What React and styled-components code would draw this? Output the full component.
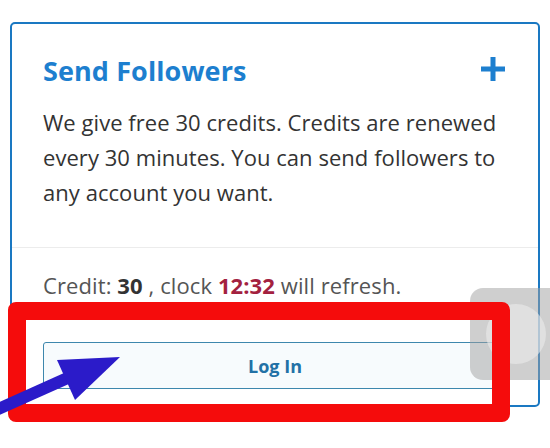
import React from 'react'
import styled, { createGlobalStyle } from 'styled-components'

const Global = createGlobalStyle`
  html, body {
    margin: 0;
    padding: 0;
    background: #fff;
  }
  body {
    font-family: "Open Sans", "Noto Sans", sans-serif;
    width: 550px;
    height: 448px;
    overflow: hidden;
    position: relative;
  }
`

const Page = styled.div`
  padding: 22px 10px 0 10px;
`

const Card = styled.div`
  border: 2px solid #1a78c2;
  border-radius: 5px;
  background: #fff;
  height: 385px;
  box-sizing: border-box;
  display: flex;
  flex-direction: column;
`

const Top = styled.div`
  padding: 30px 31px 0 31px;
  height: 224px;
  box-sizing: border-box;
  border-bottom: 1px solid #ececec;
`

const TitleRow = styled.div`
  display: flex;
  align-items: center;
  justify-content: space-between;
  height: 34px;
`

const Title = styled.h3`
  margin: 0;
  font-size: 27px;
  line-height: 34px;
  font-weight: 700;
  color: #1d7fcf;
  letter-spacing: 0.1px;
`

const Plus = styled.svg`
  width: 26px;
  height: 26px;
  margin-right: 1px;
  margin-top: -5px;
`

const Text = styled.p`
  margin: 17px 0 0 0;
  font-size: 22px;
  line-height: 35px;
  color: #333;
  letter-spacing: 0.05px;
`

const Bottom = styled.div`
  padding: 23px 31px 0 31px;
`

const Credit = styled.div`
  font-size: 22px;
  line-height: 28px;
  color: #555;
  letter-spacing: 0.1px;
`

const Strong = styled.b`
  color: ${p => p.$color || '#333'};
  font-weight: 700;
`

const Button = styled.button`
  display: block;
  width: 100%;
  height: 47px;
  margin-top: 43px;
  border: 1px solid #3d87ad;
  border-radius: 3px;
  background: #f7fbfd;
  color: #2271a6;
  font-family: "Open Sans", sans-serif;
  font-size: 18px;
  font-weight: 700;
`

const RedBox = styled.div`
  position: absolute;
  left: 8px;
  top: 302px;
  width: 502px;
  height: 120px;
  box-sizing: border-box;
  border: 18px solid #f50c0c;
  border-radius: 8px;
`

const Bubble = styled.div`
  position: absolute;
  left: 470px;
  top: 288px;
  width: 100px;
  height: 92px;
  border-radius: 13px;
  background: rgba(160, 160, 160, 0.5);
  display: flex;
  align-items: center;
  padding-left: 16px;
  box-sizing: border-box;
`

const Dot = styled.div`
  width: 60px;
  height: 60px;
  border-radius: 50%;
  background: rgba(235, 235, 235, 0.6);
`

const Arrow = styled.svg`
  position: absolute;
  left: 0;
  top: 340px;
  width: 130px;
  height: 80px;
`

export default function App() {
  return (
    <>
      <Global />
      <Page>
        <Card>
          <Top>
            <TitleRow>
              <Title>Send Followers</Title>
              <Plus viewBox="0 0 26 26">
                <path d="M13 1v24M1 13h24" stroke="#1d7fcf" strokeWidth="5" />
              </Plus>
            </TitleRow>
            <Text>
              We give free 30 credits. Credits are renewed every 30 minutes. You can send followers to any account you want.
            </Text>
          </Top>
          <Bottom>
            <Credit>
              Credit: <Strong>30</Strong> , clock <Strong $color="#a3213f">12:32</Strong> will refresh.
            </Credit>
            <Button>Log In</Button>
          </Bottom>
        </Card>
      </Page>
      <Bubble><Dot /></Bubble>
      <RedBox />
      <Arrow viewBox="0 0 130 80">
        <path d="M-4 70 L72 36" stroke="#2b1bc9" strokeWidth="12" />
        <polygon points="120,17 57,20 75,60" fill="#2b1bc9" />
      </Arrow>
    </>
  )
}
